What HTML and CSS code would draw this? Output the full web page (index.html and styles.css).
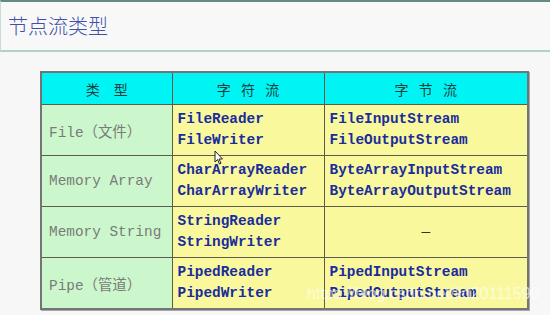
FILE: index.html
```html
<!DOCTYPE html>
<html lang="zh">
<head>
<meta charset="utf-8">
<link rel="stylesheet" href="styles.css">
</head>
<body>
<div class="title-bar"><h1 class="title">节点流类型</h1></div>
<div class="stage">
<table class="streams">
  <colgroup><col class="c1"><col class="c2"><col class="c3"></colgroup>
  <thead>
    <tr><th>类&emsp;型</th><th>字 符 流</th><th>字 节 流</th></tr>
  </thead>
  <tbody>
    <tr><td class="kind">File（文件）</td><td class="cls">FileReader<br>FileWriter</td><td class="cls">FileInputStream<br>FileOutputStream</td></tr>
    <tr><td class="kind">Memory Array</td><td class="cls">CharArrayReader<br>CharArrayWriter</td><td class="cls">ByteArrayInputStream<br>ByteArrayOutputStream</td></tr>
    <tr><td class="kind">Memory String</td><td class="cls">StringReader<br>StringWriter</td><td class="cls dash">—</td></tr>
    <tr><td class="kind">Pipe（管道）</td><td class="cls">PipedReader<br>PipedWriter</td><td class="cls">PipedInputStream<br>PipedOutputStream</td></tr>
  </tbody>
</table>
<svg class="cursor" width="10" height="16" viewBox="0 0 10 16"><path d="M1 1 L1 12 L3.5 9.5 L5.5 14 L7 13.3 L5 9 L8.5 9 Z" fill="#fff" stroke="#222" stroke-width="1"/></svg>
<div class="watermark">https://blog.csdn.net/lid20111590</div>
</div>
</body>
</html>
```
FILE: styles.css
```css
html, body {
  margin: 0;
  padding: 0;
  background: #f7f7f7;
  width: 550px;
  height: 315px;
  overflow: hidden;
}
.title-bar {
  height: 48px;
  border-top: 2px solid #5f8c84;
  border-bottom: 2px solid #b4d0cb;
  border-left: 1px solid #c8dcd8;
  background: #f8f8f8;
  display: flex;
  align-items: center;
}
.title {
  margin: -2px 0 0 7px;
  font-family: "Noto Sans CJK SC", sans-serif;
  font-weight: 300;
  font-size: 20px;
  color: #4050a8;
  letter-spacing: 0;
}
.stage {
  position: relative;
  padding: 19px 0 0 40px;
}
.streams {
  border-collapse: collapse;
  width: 487px;
  table-layout: fixed;
  border: 2px solid #747474;
  box-shadow: 1px 1px 0 #a8a8a8;
}
.c1 { width: 131px; }
.c2 { width: 152px; }
.c3 { width: 204px; }
.streams th, .streams td {
  border: 1px solid #5c5c48;
  padding: 0;
}
.streams th {
  height: 31px;
  background: #00f4f4;
  font-family: "Noto Sans CJK SC", sans-serif;
  font-weight: 400;
  font-size: 14px;
  color: #1c3c3c;
  word-spacing: 7px;
  text-align: center;
}
.streams td {
  height: 50px;
  background: #f9f89c;
  vertical-align: middle;
}
.streams td.kind {
  background: #ccf7cc;
  padding-left: 7px;
  font-family: "Liberation Mono", "Noto Sans CJK SC", monospace;
  font-size: 14.4px;
  color: #7a7a7a;
}
.streams td.cls {
  padding-left: 5px;
  font-family: "Liberation Mono", monospace;
  font-weight: bold;
  font-size: 14.4px;
  line-height: 21px;
  color: #1a2c9c;
}
.streams td.dash {
  padding-left: 0;
  text-align: center;
  font-weight: normal;
  color: #333;
}
.cursor {
  position: absolute;
  left: 214px;
  top: 98px;
}
.watermark {
  position: absolute;
  left: 307px;
  top: 233px;
  font-family: "Liberation Sans", sans-serif;
  font-size: 16px;
  color: rgba(255,255,255,0.6);
  white-space: nowrap;
}
```
